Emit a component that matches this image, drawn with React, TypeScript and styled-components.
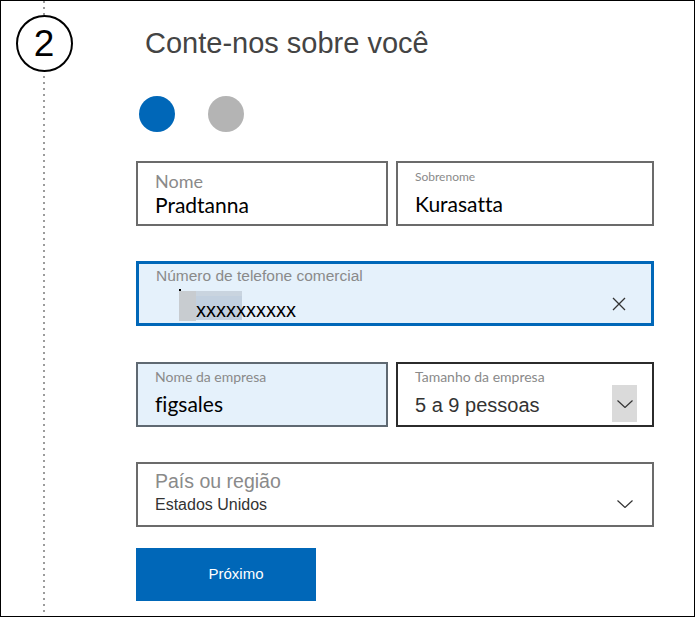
import React from 'react';
import styled, { createGlobalStyle } from 'styled-components';

const SEGOE = `Lato, "Open Sans", sans-serif`;
const ARIAL = `"Liberation Sans", Arial, sans-serif`;

const GlobalStyle = createGlobalStyle`
  body {
    margin: 0;
    background: #ffffff;
    font-family: ${ARIAL};
    font-variant-ligatures: none;
  }
`;

const Frame = styled.div`
  width: 695px;
  height: 617px;
  box-sizing: border-box;
  border: 1px solid #000;
  background: #fff;
  display: flex;
  overflow: hidden;
`;

const Rail = styled.div`
  width: 86px;
  flex-shrink: 0;
  display: flex;
  flex-direction: column;
  align-items: center;
`;

const DotLine = styled.div<{ $h?: number }>`
  width: 2px;
  ${p => (p.$h ? `height: ${p.$h}px;` : 'flex: 1;')}
  background-image: linear-gradient(to bottom, #9c9c9c 2px, transparent 2px);
  background-size: 2px 6px;
`;

const StepCircle = styled.div`
  width: 57px;
  height: 57px;
  box-sizing: border-box;
  border: 2.5px solid #000;
  border-radius: 50%;
  display: flex;
  align-items: center;
  justify-content: center;
  font-family: ${ARIAL};
  font-size: 37px;
  color: #000;
  margin-bottom: 4px;
`;

const Main = styled.div`
  flex: 1;
  padding: 28px 0 0 49px;
  display: flex;
  flex-direction: column;
`;

const Title = styled.h1`
  margin: 0 0 0 9px;
  font-family: ${ARIAL};
  font-weight: normal;
  font-size: 29px;
  line-height: 29px;
  color: #444;
`;

const Steps = styled.div`
  display: flex;
  gap: 33px;
  margin: 38px 0 0 3px;
`;

const StepDot = styled.span<{ $active?: boolean }>`
  width: 36px;
  height: 36px;
  border-radius: 50%;
  background: ${p => (p.$active ? '#0067b8' : '#b4b4b4')};
`;

const Form = styled.div`
  width: 518px;
  margin-top: 29px;
  display: flex;
  flex-direction: column;
`;

const Row = styled.div<{ $mt?: number }>`
  display: grid;
  grid-template-columns: 252px 258px;
  gap: 8px;
  margin-top: ${p => p.$mt ?? 0}px;
`;

const Field = styled.div<{ $bg?: string; $border?: string; $bw?: number; $mt?: number }>`
  height: 65px;
  box-sizing: border-box;
  display: flex;
  padding-left: 17px;
  margin-top: ${p => p.$mt ?? 0}px;
  background: ${p => p.$bg ?? '#fff'};
  border: ${p => p.$bw ?? 2}px solid ${p => p.$border ?? '#6b6b6b'};
`;

const FieldBody = styled.div<{ $pt: number }>`
  flex: 1;
  display: flex;
  flex-direction: column;
  padding-top: ${p => p.$pt}px;
  min-width: 0;
`;

const Label = styled.div<{ $font?: string; $size: number; $lh: number }>`
  font-family: ${p => p.$font ?? SEGOE};
  font-size: ${p => p.$size}px;
  line-height: ${p => p.$lh}px;
  color: #8a8a8a;
  white-space: nowrap;
`;

const Value = styled.div<{ $font?: string; $size: number; $lh: number; $mt: number; $color?: string }>`
  font-family: ${p => p.$font ?? SEGOE};
  font-size: ${p => p.$size}px;
  line-height: ${p => p.$lh}px;
  margin-top: ${p => p.$mt}px;
  color: ${p => p.$color ?? '#000'};
  white-space: nowrap;
`;

const EditRow = styled.div`
  display: flex;
  margin: 6px 0 0 23px;
`;

const Caret = styled.span`
  position: relative;
  width: 17px;
  height: 30px;
  background: #c8ccd0;

  &::before {
    content: '';
    position: absolute;
    left: 0;
    top: -2px;
    width: 2px;
    height: 2px;
    background: #000;
  }
`;

const Selected = styled.span`
  font-family: ${ARIAL};
  font-size: 20px;
  line-height: 20px;
  padding-top: 9px;
  height: 20px;
  color: #000;
  background:
    linear-gradient(to bottom, #c9d4df 5px, transparent 5px) 0 0 / 46px 100% no-repeat,
    linear-gradient(to right, #c2d0df 46px, transparent 46px);
`;

const ClearIcon = styled.span`
  align-self: flex-end;
  display: flex;
  margin: 0 25px 12px 0;
`;

const ChevronBox = styled.span<{ $bg?: string }>`
  align-self: flex-end;
  width: 25px;
  height: 37px;
  margin: 0 15px 3px 0;
  display: flex;
  align-items: center;
  justify-content: center;
  background: ${p => p.$bg ?? 'transparent'};
`;

const NextButton = styled.button`
  width: 180px;
  height: 53px;
  margin-top: 21px;
  border: none;
  background: #0067b8;
  color: #fff;
  font-family: ${ARIAL};
  font-size: 15px;
  line-height: 17px;
  padding: 0 0 3px 20px;
  display: flex;
  align-items: center;
  justify-content: center;
  cursor: pointer;
`;

const Chevron = () => (
  <svg width="16" height="8" viewBox="0 0 16 8">
    <polyline points="0.5,0.5 8,7.5 15.5,0.5" fill="none" stroke="#333" strokeWidth="1.2" />
  </svg>
);

const Cross = () => (
  <svg width="14" height="14" viewBox="0 0 14 14">
    <path d="M1 1 L13 13 M13 1 L1 13" stroke="#333" strokeWidth="1.3" fill="none" />
  </svg>
);

const App: React.FC = () => {
  return (
    <>
      <GlobalStyle />
      <Frame>
        <Rail>
          <DotLine $h={14} />
          <StepCircle>2</StepCircle>
          <DotLine />
        </Rail>

        <Main>
          <Title>Conte-nos sobre você</Title>

          <Steps>
            <StepDot $active />
            <StepDot />
          </Steps>

          <Form>
            <Row>
              <Field>
                <FieldBody $pt={8}>
                  <Label $size={18} $lh={20}>Nome</Label>
                  <Value $size={21} $lh={24} $mt={2}>Pradtanna</Value>
                </FieldBody>
              </Field>
              <Field>
                <FieldBody $pt={7}>
                  <Label $size={12} $lh={14}>Sobrenome</Label>
                  <Value $size={21} $lh={24} $mt={8}>Kurasatta</Value>
                </FieldBody>
              </Field>
            </Row>

            {/* phone field, focused with the text selected */}
            <Field $mt={35} $bg="#e5f1fb" $border="#0067b8" $bw={3}>
              <FieldBody $pt={3}>
                <Label $font={ARIAL} $size={15.5} $lh={18}>Número de telefone comercial</Label>
                <EditRow>
                  <Caret />
                  <Selected>xxxxxxxxxx</Selected>
                </EditRow>
              </FieldBody>
              <ClearIcon>
                <Cross />
              </ClearIcon>
            </Field>

            <Row $mt={36}>
              <Field $bg="#e5f1fb" $border="#5f6972">
                <FieldBody $pt={5}>
                  <Label $size={14} $lh={16}>Nome da empresa</Label>
                  <Value $size={21} $lh={24} $mt={7}>figsales</Value>
                </FieldBody>
              </Field>
              <Field $border="#2b2b2b">
                <FieldBody $pt={5}>
                  <Label $size={14} $lh={16}>Tamanho da empresa</Label>
                  <Value $font={ARIAL} $size={20} $lh={24} $mt={8} $color="#333">5 a 9 pessoas</Value>
                </FieldBody>
                <ChevronBox $bg="#dadada">
                  <Chevron />
                </ChevronBox>
              </Field>
            </Row>

            <Field $mt={35}>
              <FieldBody $pt={6}>
                <Label $font={ARIAL} $size={19.5} $lh={22}>País ou região</Label>
                <Value $font={ARIAL} $size={16} $lh={18} $mt={4} $color="#333">Estados Unidos</Value>
              </FieldBody>
              <ChevronBox>
                <Chevron />
              </ChevronBox>
            </Field>

            <NextButton>Próximo</NextButton>
          </Form>
        </Main>
      </Frame>
    </>
  );
};

export default App;
